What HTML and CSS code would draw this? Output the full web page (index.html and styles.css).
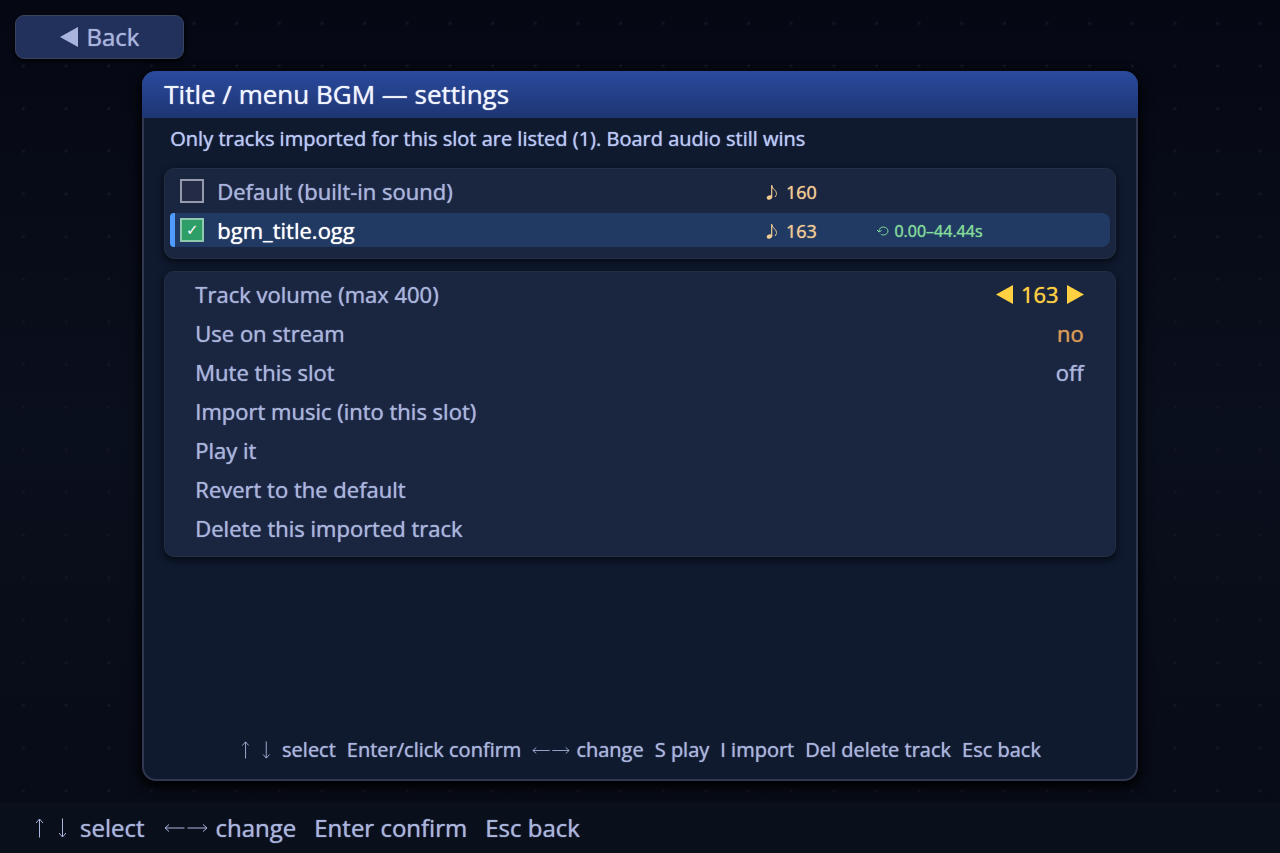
FILE: index.html
```
<!DOCTYPE html>
<html lang="en">
<head>
    <meta charset="UTF-8">
    <meta name="viewport" content="width=device-width, initial-scale=1.0">
    <title>Title / menu BGM — settings</title>
    <link rel="stylesheet" href="styles.css">
</head>
<body>
    <svg class="defs" aria-hidden="true">
        <symbol id="left" viewBox="0 0 18 20"><path d="M0 10 18 0v20z" fill="currentColor"/></symbol>
        <symbol id="right" viewBox="0 0 18 20"><path d="M18 10 0 0v20z" fill="currentColor"/></symbol>
        <symbol id="updown" viewBox="0 0 32 20"><path d="M5.500 19.500V1M2 5l3.500-4L9 5M28.500.5V19M25 15l3.500 4 3.500-4" fill="none" stroke="currentColor"/></symbol>
        <symbol id="leftright" viewBox="0 0 44 10"><path d="M20.500 5H1M5 1.500 1 5l4 3.500M23.500 5H43M39 1.500 43 5l-4 3.500" fill="none" stroke="currentColor"/></symbol>
        <symbol id="note" viewBox="0 0 12 18"><ellipse cx="3.500" cy="14.500" rx="2.800" ry="2" transform="rotate(-20 3.500 14.500)" fill="currentColor"/><path d="M5.700 14V2" fill="none" stroke="currentColor" stroke-width="1.200"/><path d="M6 3c0 3 4.500 4 4.500 7.500 0 1.300-.5 2-1.500 3.500" fill="none" stroke="currentColor"/></symbol>
        <symbol id="loop" viewBox="0 0 12 12"><path d="M2 6.500C2 3.500 4 2 6.500 2S11 4 11 6s-2 4-4.500 4C5 10 4 9.500 3.500 8.800M0 5l2 2 2.500-1.500" fill="none" stroke="currentColor"/></symbol>
    </svg>

    <nav class="topbar">
        <button type="button" class="back"><svg><use href="#left"/></svg>Back</button>
    </nav>

    <main class="panel">
        <h1>Title / menu BGM — settings</h1>
        <div class="content">
            <p class="info">Only tracks imported for this slot are listed (1). Board audio still wins</p>
            <div class="card">
                <label class="track">
                    <input type="checkbox">
                    <span class="name">Default (built-in sound)</span>
                    <span class="volume"><svg><use href="#note"/></svg>160</span>
                </label>
                <label class="track selected">
                    <input type="checkbox" checked>
                    <span class="name">bgm_title.ogg</span>
                    <span class="volume"><svg><use href="#note"/></svg>163</span>
                    <span class="range"><svg><use href="#loop"/></svg>0.00–44.44s</span>
                </label>
            </div>
            <div class="card options">
                <div class="option">
                    <span>Track volume (max 400)</span>
                    <span class="stepper">
                        <button type="button" aria-label="Decrease volume"><svg><use href="#left"/></svg></button>
                        <output>163</output>
                        <button type="button" aria-label="Increase volume"><svg><use href="#right"/></svg></button>
                    </span>
                </div>
                <button type="button" class="option"><span>Use on stream</span><span class="no">no</span></button>
                <button type="button" class="option"><span>Mute this slot</span><span>off</span></button>
                <button type="button" class="option">Import music (into this slot)</button>
                <button type="button" class="option">Play it</button>
                <button type="button" class="option">Revert to the default</button>
                <button type="button" class="option">Delete this imported track</button>
            </div>
        </div>
        <div class="hints">
            <span><svg class="updown"><use href="#updown"/></svg>select</span>
            <span>Enter/click confirm</span>
            <span><svg class="leftright"><use href="#leftright"/></svg>change</span>
            <span>S play</span>
            <span>I import</span>
            <span>Del delete track</span>
            <span>Esc back</span>
        </div>
    </main>

    <footer class="hints">
        <span><svg class="updown"><use href="#updown"/></svg>select</span>
        <span><svg class="leftright"><use href="#leftright"/></svg>change</span>
        <span>Enter confirm</span>
        <span>Esc back</span>
    </footer>
</body>
</html>
```
FILE: styles.css
```
* {
    box-sizing: border-box;
}
body {
    margin: 0;
    min-height: 100vh;
    display: flex;
    flex-direction: column;
    font-family: "Open Sans", "Noto Sans", sans-serif;
    font-size: 22px;
    font-weight: 500;
    color: #a9b5dc;
    text-shadow: 0 0 1px currentColor;
    background-color: #080c18;
    background-image:
        radial-gradient(circle, #131724 1px, transparent 2px),
        linear-gradient(#050813, #0a0f1d 50%, #070b16);
    background-size: calc(100% / 30) calc(100% / 20), 100% 100%;
    background-position: 2px 2px, 0 0;
}
button {
    font: inherit;
    color: inherit;
    text-shadow: inherit;
    background: none;
    border: none;
    padding: 0;
    cursor: pointer;
}
svg {
    flex: none;
}
.defs {
    display: none;
}

.topbar {
    padding: 15px 15px 12px;
}
.back {
    display: flex;
    align-items: center;
    justify-content: center;
    gap: 9px;
    width: 169px;
    height: 44px;
    padding-bottom: 1px;
    font-size: 24px;
    background: #22305c;
    border: 1px solid #3a4360;
    border-radius: 9px;
    box-shadow: 0 2px 4px #000;
}
.back svg {
    width: 18px;
    height: 20px;
}

.panel {
    flex: 1;
    display: flex;
    flex-direction: column;
    width: calc(78% - 3px);
    margin: 0 auto 22px;
    background: #101a2f;
    border: 2px solid #303750;
    border-top: none;
    border-radius: 14px;
    box-shadow: 0 4px 12px 2px #000;
}
.panel h1 {
    margin: 0 -2px;
    padding: 0 22px;
    font-size: 26px;
    font-weight: 500;
    line-height: 47px;
    color: #f0f4ff;
    background: linear-gradient(#2a4a9e, #1e3572);
    border-radius: 14px 14px 0 0;
}
.content {
    flex: 1;
    padding: 0 20px;
}
.info {
    margin: 0;
    padding: 0 6px 8px;
    font-size: 20px;
    line-height: 42px;
    color: #b9c8f4;
}

.card {
    display: flex;
    flex-direction: column;
    gap: 5px;
    margin-bottom: 12px;
    padding: 5px 5px 11px;
    background: #1a2540;
    border: 1px solid #242e44;
    border-radius: 10px;
    box-shadow: 0 3px 6px 1px #070d18;
}
.track {
    display: grid;
    grid-template-columns: 24px 60% 12% 1fr;
    align-items: center;
    height: 34px;
    padding-left: 10px;
    border-radius: 8px;
}
.track.selected {
    padding-left: 5px;
    background: #203a63;
    border-left: 5px solid #4f9bff;
    border-radius: 4px 8px 8px 4px;
    color: #fff;
}
.track input {
    appearance: none;
    width: 24px;
    height: 24px;
    margin: 0;
    background: #242b47;
    border: 2px solid #959bad;
}
.track input:checked {
    display: grid;
    place-items: center;
    background: #2e9e68;
    border-color: #90c9ae;
}
.track input:checked::after {
    content: "✓";
    font: 15px "DejaVu Sans", sans-serif;
    color: #fff;
}
.name {
    padding-left: 13px;
}
.volume,
.range {
    display: flex;
    align-items: center;
    padding: 2px 0 0 4px;
    font-size: 18px;
    color: #f2cb93;
}
.volume svg {
    width: 12px;
    height: 18px;
    margin-right: 8px;
}
.range {
    font-size: 16px;
    color: #83dc9b;
}
.range svg {
    width: 12px;
    height: 12px;
    margin-right: 5px;
}

.options {
    padding: 5px 31px 11px 30px;
}
.option {
    display: flex;
    align-items: center;
    justify-content: space-between;
    height: 34px;
    text-align: left;
}
.stepper {
    display: flex;
    align-items: center;
    gap: 8px;
    color: #ffd042;
}
.stepper button {
    display: flex;
}
.stepper svg {
    width: 17px;
    height: 19px;
}
.no {
    color: #d79b58;
}

.hints {
    display: flex;
    justify-content: center;
    gap: 11px;
    padding-bottom: 14px;
    font-size: 20px;
    line-height: 30px;
}
.hints span {
    display: flex;
    align-items: center;
    white-space: nowrap;
}
.updown {
    width: 32px;
    height: 18px;
    margin-right: 11px;
}
.leftright {
    width: 38px;
    height: 9px;
    margin-right: 6px;
}
footer.hints {
    justify-content: flex-start;
    gap: 18px;
    padding: 0 34px;
    font-size: 24px;
    line-height: 50px;
    background: #0a0f1c;
}
footer .updown {
    height: 20px;
    margin-right: 14px;
}
footer .leftright {
    width: 46px;
    height: 10px;
    margin-right: 7px;
}
```
